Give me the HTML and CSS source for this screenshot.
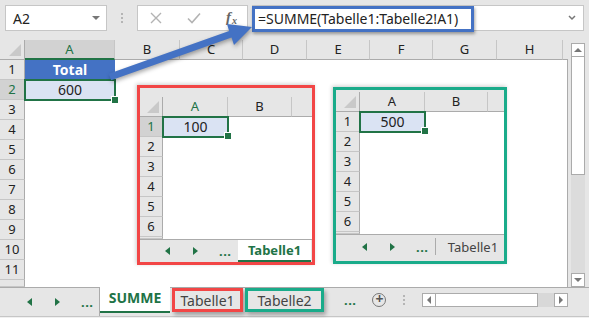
FILE: index.html
```html
<!DOCTYPE html>
<html lang="de">
<head>
  <meta charset="UTF-8" />
  <title>SUMME über mehrere Blätter</title>
  <link rel="stylesheet" href="styles.css">
</head>
<body>

  <div class="app">

    <div class="topbar">
      <div class="namebox">
        <span>A2</span>
        <span class="tri-down"></span>
      </div>
      <div class="grip"><span></span></div>
      <div class="fxbox">
        <svg width="12" height="12" viewBox="0 0 12 12"><path d="M1 1 L11 11 M11 1 L1 11" stroke="#b3b3b3" stroke-width="1.4" fill="none"/></svg>
        <svg width="14" height="12" viewBox="0 0 14 12"><path d="M1 6.5 L5 10.5 L13 1.5" stroke="#b3b3b3" stroke-width="1.6" fill="none"/></svg>
        <i class="fx">f<span class="fx-x">x</span></i>
      </div>
      <div class="formula">
        <span class="formula-hl">=SUMME(Tabelle1:Tabelle2!A1)</span>
        <svg class="chev" width="8" height="6" viewBox="0 0 8 6"><path d="M1 1 L4 4 L7 1" stroke="#777" stroke-width="1.5" fill="none"/></svg>
      </div>
    </div>

    <div class="sheet">
      <div class="grid">
        <div class="corner"></div>
        <div class="ch active">A</div>
        <div class="ch">B</div>
        <div class="ch">C</div>
        <div class="ch">D</div>
        <div class="ch">E</div>
        <div class="ch">F</div>
        <div class="ch">G</div>
        <div class="ch">H</div>
        <div class="ch last"></div>

        <div class="rh">1</div>
        <div class="cell total">Total</div>
        <div class="rh active">2</div>
        <div class="cell sel">600</div>
        <div class="rh">3</div>
        <div class="rh">4</div>
        <div class="rh">5</div>
        <div class="rh">6</div>
        <div class="rh">7</div>
        <div class="rh">8</div>
        <div class="rh">9</div>
        <div class="rh">10</div>
        <div class="rh">11</div>
        <div class="rh"></div>
      </div>
      <div class="vscroll">
        <div class="sb-btn"><span class="tri-up"></span></div>
        <div class="sb-thumb"></div>
        <div class="sb-track"></div>
        <div class="sb-btn"><span class="tri-down"></span></div>
      </div>
    </div>

    <div class="tabbar">
      <div class="tab-nav">
        <span class="arr-l"></span>
        <span class="arr-r"></span>
        <span class="more">...</span>
      </div>
      <div class="tab active">SUMME</div>
      <div class="tab boxed red">Tabelle1</div>
      <div class="tab boxed teal">Tabelle2</div>
      <span class="more more-right">...</span>
      <span class="plus">+</span>
      <div class="grip small"><span></span></div>
      <div class="hscroll">
        <div class="hs-btn"><span class="tri-left"></span></div>
        <div class="hs-thumb"></div>
        <div class="hs-track"></div>
        <div class="hs-btn"><span class="tri-right"></span></div>
      </div>
    </div>
    <div class="statusline"></div>

    <!-- pasted pictures of the two source sheets -->
    <div class="mini mini-red">
      <div class="mini-grid">
        <div class="corner"></div>
        <div class="ch active">A</div>
        <div class="ch">B</div>
        <div class="ch last"></div>
        <div class="rh active">1</div>
        <div class="cell sel">100</div>
        <div class="rh">2</div>
        <div class="rh">3</div>
        <div class="rh">4</div>
        <div class="rh">5</div>
        <div class="rh">6</div>
        <div class="rh"></div>
      </div>
      <div class="mini-tabs">
        <div class="tab-nav">
          <span class="arr-l"></span>
          <span class="arr-r"></span>
          <span class="more">...</span>
        </div>
        <div class="tab active">Tabelle1</div>
      </div>
    </div>

    <div class="mini mini-teal">
      <div class="mini-grid">
        <div class="corner"></div>
        <div class="ch">A</div>
        <div class="ch">B</div>
        <div class="ch last"></div>
        <div class="rh">1</div>
        <div class="cell sel">500</div>
        <div class="rh">2</div>
        <div class="rh">3</div>
        <div class="rh">4</div>
        <div class="rh">5</div>
        <div class="rh">6</div>
        <div class="rh"></div>
      </div>
      <div class="mini-tabs">
        <div class="tab-nav">
          <span class="arr-l"></span>
          <span class="arr-r"></span>
          <span class="more">...</span>
        </div>
        <div class="tab plain">Tabelle1</div>
      </div>
    </div>

    <svg class="pointer" width="589" height="318" viewBox="0 0 589 318">
      <polygon points="108.8,73.7 229.1,31 227,24 252,27 234,45 231.5,37.6 111.2,80.3" fill="#4472c4"/>
    </svg>

  </div>

</body>
</html>
```

FILE: styles.css
```css
* {
  box-sizing: border-box;
}

body {
  margin: 0;
  font-family: 'Noto Sans', 'Open Sans', sans-serif;
  color: #222;
}

.app {
  position: relative;
  width: 589px;
  height: 318px;
  background: #e6e6e6;
  overflow: hidden;
}

/* ---------- formula bar ---------- */

.topbar {
  height: 40px;
  display: flex;
  padding: 5px 5px 0 5px;
}

.namebox {
  width: 102px;
  height: 26px;
  background: #fff;
  border: 1px solid #c6c6c6;
  display: flex;
  align-items: center;
  justify-content: space-between;
  padding: 0 6px 0 7px;
  font-size: 14px;
}

.tri-down {
  width: 0;
  height: 0;
  border-left: 4px solid transparent;
  border-right: 4px solid transparent;
  border-top: 4px solid #777;
}

.tri-up {
  width: 0;
  height: 0;
  border-left: 4px solid transparent;
  border-right: 4px solid transparent;
  border-bottom: 4px solid #777;
}

.tri-left {
  width: 0;
  height: 0;
  border-top: 4px solid transparent;
  border-bottom: 4px solid transparent;
  border-right: 4px solid #777;
}

.tri-right {
  width: 0;
  height: 0;
  border-top: 4px solid transparent;
  border-bottom: 4px solid transparent;
  border-left: 4px solid #777;
}

.grip {
  width: 30px;
  height: 26px;
  display: flex;
  justify-content: center;
  align-items: center;
}

.grip span {
  width: 2px;
  height: 2px;
  background: #b5b5b5;
  margin-top: -8px;
  box-shadow: 0 4px 0 #b5b5b5, 0 8px 0 #b5b5b5;
}

.fxbox {
  width: 111px;
  height: 26px;
  background: #fff;
  border: 1px solid #c6c6c6;
  display: flex;
  align-items: center;
  padding: 0 10px 0 12px;
  justify-content: space-between;
}

.fx {
  font-family: 'Liberation Serif', serif;
  font-size: 15px;
  line-height: 1;
  color: #666;
  font-weight: bold;
  display: flex;
  align-items: flex-end;
  margin-top: -2px;
}

.fx-x {
  font-size: 10px;
  margin-left: 1px;
  margin-bottom: -1px;
}

.formula {
  flex: 1;
  height: 26px;
  margin-left: 4px;
  background: #fff;
  border: 1px solid #c6c6c6;
  display: flex;
  align-items: center;
  justify-content: space-between;
  padding-right: 7px;
  font-size: 14px;
}

.formula-hl {
  width: 222px;
  height: 26px;
  margin: 1px 0 0 -1px;
  border: 3px solid #4472c4;
  padding-left: 3px;
  line-height: 19px;
  box-shadow: 1px 2px 3px rgba(0, 0, 0, 0.35);
}

/* ---------- sheet ---------- */

.sheet {
  height: 247px;
  display: flex;
}

.grid {
  width: 568px;
  display: grid;
  grid-template-columns: 25px 90px 65px 63px 64px 63px 63px 64px 66px 5px;
  grid-template-rows: repeat(12, 20px) 7px;
  background: #fff;
  border-right: 1px solid #ababab;
  font-size: 13px;
}

.corner {
  background: #e6e6e6;
  border-right: 1px solid #ababab;
  border-bottom: 1px solid #ababab;
  position: relative;
}

.corner::after {
  content: "";
  position: absolute;
  right: 3px;
  bottom: 3px;
  border-left: 12px solid transparent;
  border-bottom: 12px solid #c9c9c9;
}

.ch {
  background: #e6e6e6;
  border-right: 1px solid #c6c6c6;
  border-bottom: 1px solid #ababab;
  text-align: center;
  line-height: 19px;
}

.ch.last {
  border-right: none;
}

.ch.active {
  background: #d2d2d2;
  color: #217346;
  border-bottom: 2px solid #217346;
}

.rh {
  grid-column: 1;
  background: #e6e6e6;
  border-right: 1px solid #ababab;
  border-bottom: 1px solid #c6c6c6;
  text-align: center;
  line-height: 19px;
}

.rh.active {
  background: #d2d2d2;
  color: #217346;
}

.cell {
  text-align: center;
  line-height: 20px;
  font-size: 14px;
}

.cell.total {
  background: #4472c4;
  color: #fff;
  font-weight: bold;
}

.cell.sel {
  position: relative;
  background: #dae3f3;
}

.cell.sel::after {
  content: "";
  position: absolute;
  inset: -1px;
  border: 2px solid #217346;
}

.cell.sel::before {
  content: "";
  position: absolute;
  right: -4px;
  bottom: -4px;
  width: 6px;
  height: 6px;
  background: #217346;
  border: 1px solid #fff;
  z-index: 1;
}

.vscroll {
  flex: 1;
  display: flex;
  flex-direction: column;
  padding: 3px 4px 0 3px;
}

.sb-btn, .hs-btn {
  height: 14px;
  background: #fff;
  border: 1px solid #ababab;
  display: flex;
  align-items: center;
  justify-content: center;
}

.sb-thumb {
  height: 118px;
  background: #fff;
  border: 1px solid #ababab;
  border-top: none;
}

.sb-track {
  flex: 1;
  background: #dcdcdc;
}

/* ---------- sheet tabs ---------- */

.tabbar {
  height: 29px;
  display: flex;
  align-items: center;
  font-size: 14px;
  border-top: 1px solid #ababab;
}

.tab-nav {
  width: 100px;
  height: 100%;
  display: flex;
  align-items: center;
  border-right: 1px solid #ababab;
  padding-left: 27px;
}

.arr-l {
  width: 0;
  height: 0;
  border-top: 4px solid transparent;
  border-bottom: 4px solid transparent;
  border-right: 5px solid #217346;
}

.arr-r {
  width: 0;
  height: 0;
  border-top: 4px solid transparent;
  border-bottom: 4px solid transparent;
  border-left: 5px solid #217346;
  margin-left: 23px;
}

.more {
  color: #217346;
  font-weight: bold;
  font-size: 13px;
  margin-left: 21px;
  letter-spacing: 0.5px;
}

.tab {
  height: 100%;
  display: flex;
  align-items: center;
  justify-content: center;
  color: #444;
}

.tabbar .tab.active {
  width: 70px;
  margin-top: -2px;
  height: calc(100% + 2px);
  background: #fff;
  color: #217346;
  font-weight: bold;
  border-bottom: 2px solid #217346;
  margin-bottom: 6px;
  padding-top: 1px;
}

.tab.boxed {
  height: 24px;
  margin-top: -4px;
  border: 3px solid;
  box-shadow: 2px 3px 4px rgba(0, 0, 0, 0.3);
}

.tab.red {
  width: 71px;
  margin-left: 2px;
  border-color: #f24646;
}

.tab.teal {
  width: 79px;
  margin-left: 2px;
  border-color: #1aab8a;
}

.more-right {
  margin-left: 20px;
  margin-top: -5px;
}

.plus {
  width: 14px;
  height: 14px;
  margin: -5px 0 0 16px;
  border: 1.5px solid #777;
  border-radius: 50%;
  color: #555;
  font-size: 14px;
  line-height: 10px;
  text-align: center;
  font-weight: bold;
}

.grip.small {
  width: 36px;
  height: 20px;
  margin-top: -5px;
}

.hscroll {
  width: 146px;
  height: 14px;
  margin-top: -5px;
  display: flex;
}

.hs-btn {
  width: 14px;
}

.hs-thumb {
  width: 102px;
  background: #fff;
  border: 1px solid #ababab;
  border-left: none;
}

.hs-track {
  flex: 1;
  background: #d8d8d8;
}

.statusline {
  height: 2px;
  border-top: 1px solid #c6c6c6;
  background: #f0f0f0;
}

/* ---------- pasted sheet pictures ---------- */

.mini {
  position: absolute;
  background: #e6e6e6;
  border: 3px solid;
  display: flex;
  flex-direction: column;
  box-shadow: -1px -1px 4px rgba(0, 0, 0, 0.2);
}

.mini-red {
  left: 137px;
  top: 85px;
  width: 178px;
  height: 180px;
  padding-top: 9px;
  border-color: #f24646;
}

.mini-teal {
  left: 333px;
  top: 87px;
  width: 174px;
  height: 177px;
  padding-top: 2px;
  border-color: #1aab8a;
}

.mini-grid {
  display: grid;
  grid-template-rows: repeat(7, 20px) 2px;
  background: #fff;
  font-size: 13px;
}

.mini-red .mini-grid {
  grid-template-columns: 23px 65px 64px 1fr;
}

.mini-teal .mini-grid {
  grid-template-columns: 24px 65px 63px 1fr;
}

.mini .ch.active {
  border-bottom: 1px solid #ababab;
  background: #e6e6e6;
}

.mini .cell.sel::before {
  bottom: -3px;
}

.mini-tabs {
  height: 23px;
  display: flex;
  border-top: 1px solid #ababab;
  font-size: 13px;
}

.mini-teal .mini-tabs {
  height: 24px;
}

.mini .tab-nav {
  width: 98px;
  border-right: none;
  padding-left: 25px;
}

.mini-teal .tab-nav {
  width: 99px;
  padding-left: 26px;
}

.mini .tab.active {
  width: 73px;
  background: #fff;
  color: #217346;
  font-weight: bold;
  border-bottom: 2px solid #217346;
}

.mini .tab.plain {
  flex: 1;
  border-left: 1px solid #ababab;
  margin: 3px 0;
  height: auto;
  padding-left: 6px;
}

.pointer {
  position: absolute;
  left: 0;
  top: 0;
  filter: drop-shadow(1px 2px 2px rgba(0, 0, 0, 0.35));
}
```
